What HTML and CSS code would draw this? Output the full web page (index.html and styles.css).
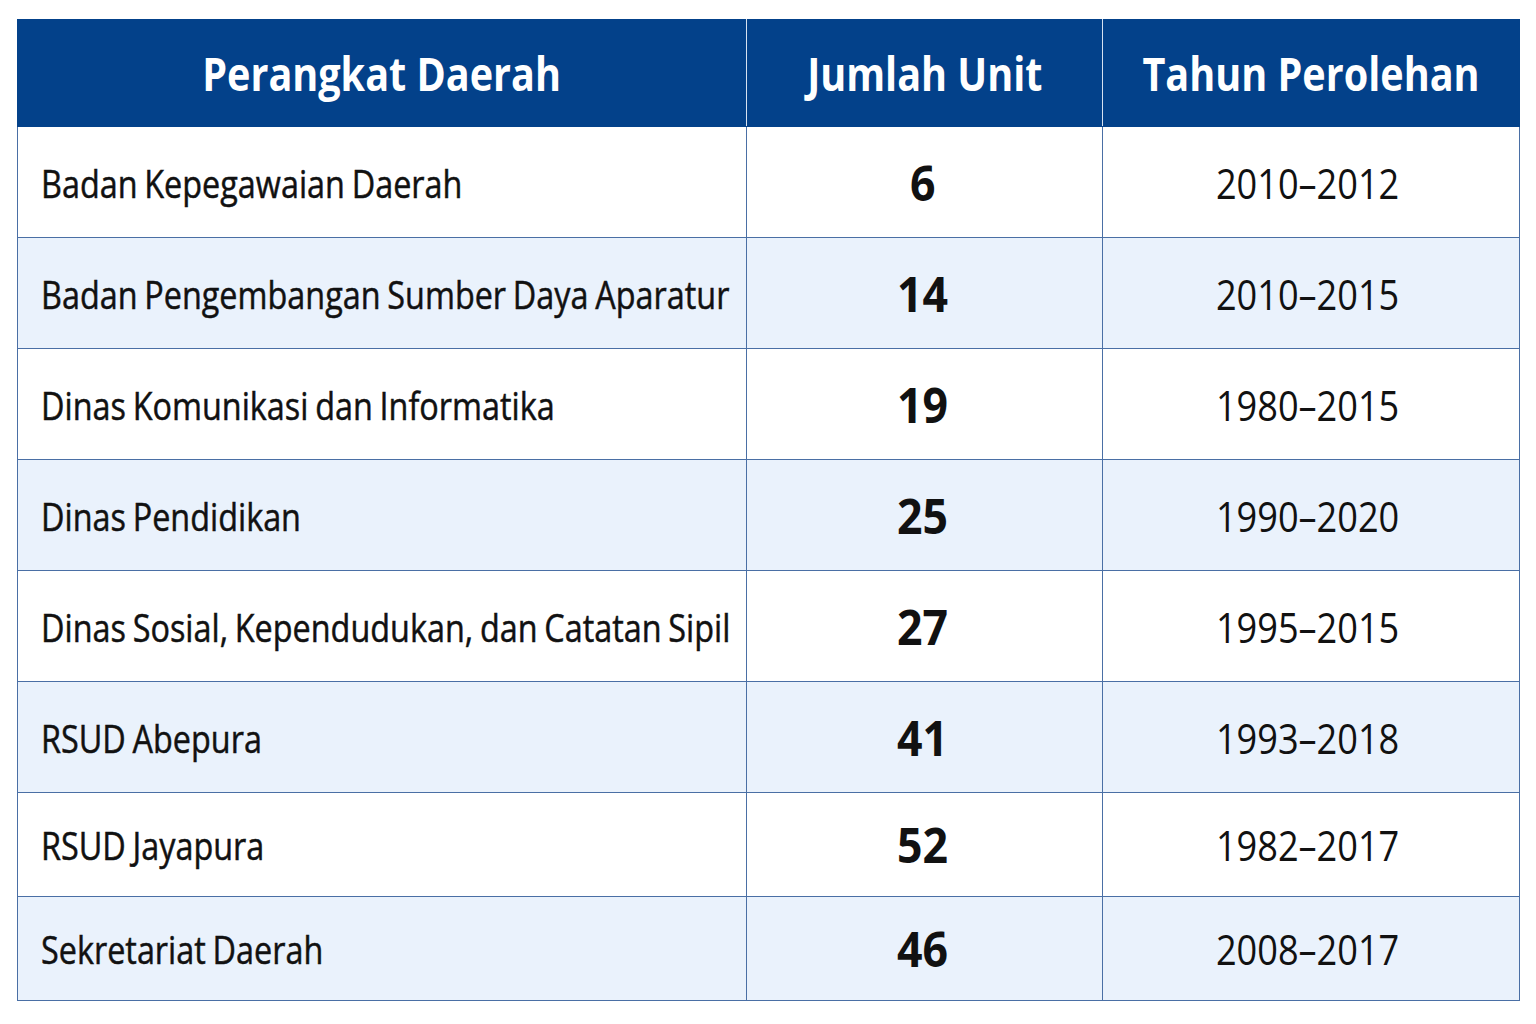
FILE: index.html
```html
<!DOCTYPE html>
<html lang="id">
<head>
<meta charset="utf-8">
<title>Perangkat Daerah</title>
<link rel="stylesheet" href="styles.css">
</head>
<body>
<table class="data">
  <colgroup>
    <col class="c1"><col class="c2"><col class="c3">
  </colgroup>
  <thead>
    <tr class="head">
      <th><span class="sq">Perangkat Daerah</span></th>
      <th><span class="sq">Jumlah Unit</span></th>
      <th><span class="sq">Tahun Perolehan</span></th>
    </tr>
  </thead>
  <tbody>
    <tr><td class="name"><span class="sq">Badan Kepegawaian Daerah</span></td><td class="num"><span class="sq">6</span></td><td class="yr"><span class="sq">2010–2012</span></td></tr>
    <tr class="alt"><td class="name"><span class="sq">Badan Pengembangan Sumber Daya Aparatur</span></td><td class="num"><span class="sq">14</span></td><td class="yr"><span class="sq">2010–2015</span></td></tr>
    <tr><td class="name"><span class="sq">Dinas Komunikasi dan Informatika</span></td><td class="num"><span class="sq">19</span></td><td class="yr"><span class="sq">1980–2015</span></td></tr>
    <tr class="alt"><td class="name"><span class="sq">Dinas Pendidikan</span></td><td class="num"><span class="sq">25</span></td><td class="yr"><span class="sq">1990–2020</span></td></tr>
    <tr><td class="name"><span class="sq">Dinas Sosial, Kependudukan, dan Catatan Sipil</span></td><td class="num"><span class="sq">27</span></td><td class="yr"><span class="sq">1995–2015</span></td></tr>
    <tr class="alt"><td class="name"><span class="sq">RSUD Abepura</span></td><td class="num"><span class="sq">41</span></td><td class="yr"><span class="sq">1993–2018</span></td></tr>
    <tr class="short"><td class="name"><span class="sq">RSUD Jayapura</span></td><td class="num"><span class="sq">52</span></td><td class="yr"><span class="sq">1982–2017</span></td></tr>
    <tr class="alt short"><td class="name"><span class="sq">Sekretariat Daerah</span></td><td class="num"><span class="sq">46</span></td><td class="yr"><span class="sq">2008–2017</span></td></tr>
  </tbody>
</table>
</body>
</html>
```
FILE: styles.css
```css
html, body {
  margin: 0;
  padding: 0;
  background: #ffffff;
}
body {
  padding: 19px 0 0 17px;
  font-family: "Open Sans", "Liberation Sans", sans-serif;
  color: #111111;
}
.data {
  border-collapse: collapse;
  table-layout: fixed;
  width: 1502px;
  border: 1.5px solid #4a6fa5;
}
.c1 { width: 729px; }
.c2 { width: 356px; }
.c3 { width: 417px; }
.data th, .data td {
  border: 1.5px solid #4a6fa5;
  padding: 0;
  vertical-align: middle;
  white-space: nowrap;
  overflow: visible;
}
.head th {
  height: 106px;
  background: #03418a;
  color: #ffffff;
  font-size: 46px;
  font-weight: 700;
  text-align: center;
  border-color: #03418a;
  border-right-color: #d7e2f1;
}
.head th:last-child { border-right-color: #03418a; }
.head .sq { transform: scaleX(0.86); }
.data tbody tr { height: 111px; }
.data tbody tr.short { height: 104px; }
.data tbody tr.alt td { background: #eaf2fc; }
.name {
  font-size: 39px;
  word-spacing: -2px;
  -webkit-text-stroke: 0.5px #111111;
  padding-left: 23px !important;
  text-align: left;
}
.name .sq {
  transform: scaleX(0.83);
  transform-origin: left center;
}
.num {
  font-size: 48px;
  font-weight: 700;
  text-align: center;
  padding-right: 4px !important;
}
.num .sq { transform: scaleX(0.93); }
.yr {
  font-size: 42px;
  text-align: center;
  padding-right: 6px !important;
}
.yr .sq { transform: scaleX(0.86); }
.sq {
  display: inline-block;
  transform: scaleX(0.82);
}
```
